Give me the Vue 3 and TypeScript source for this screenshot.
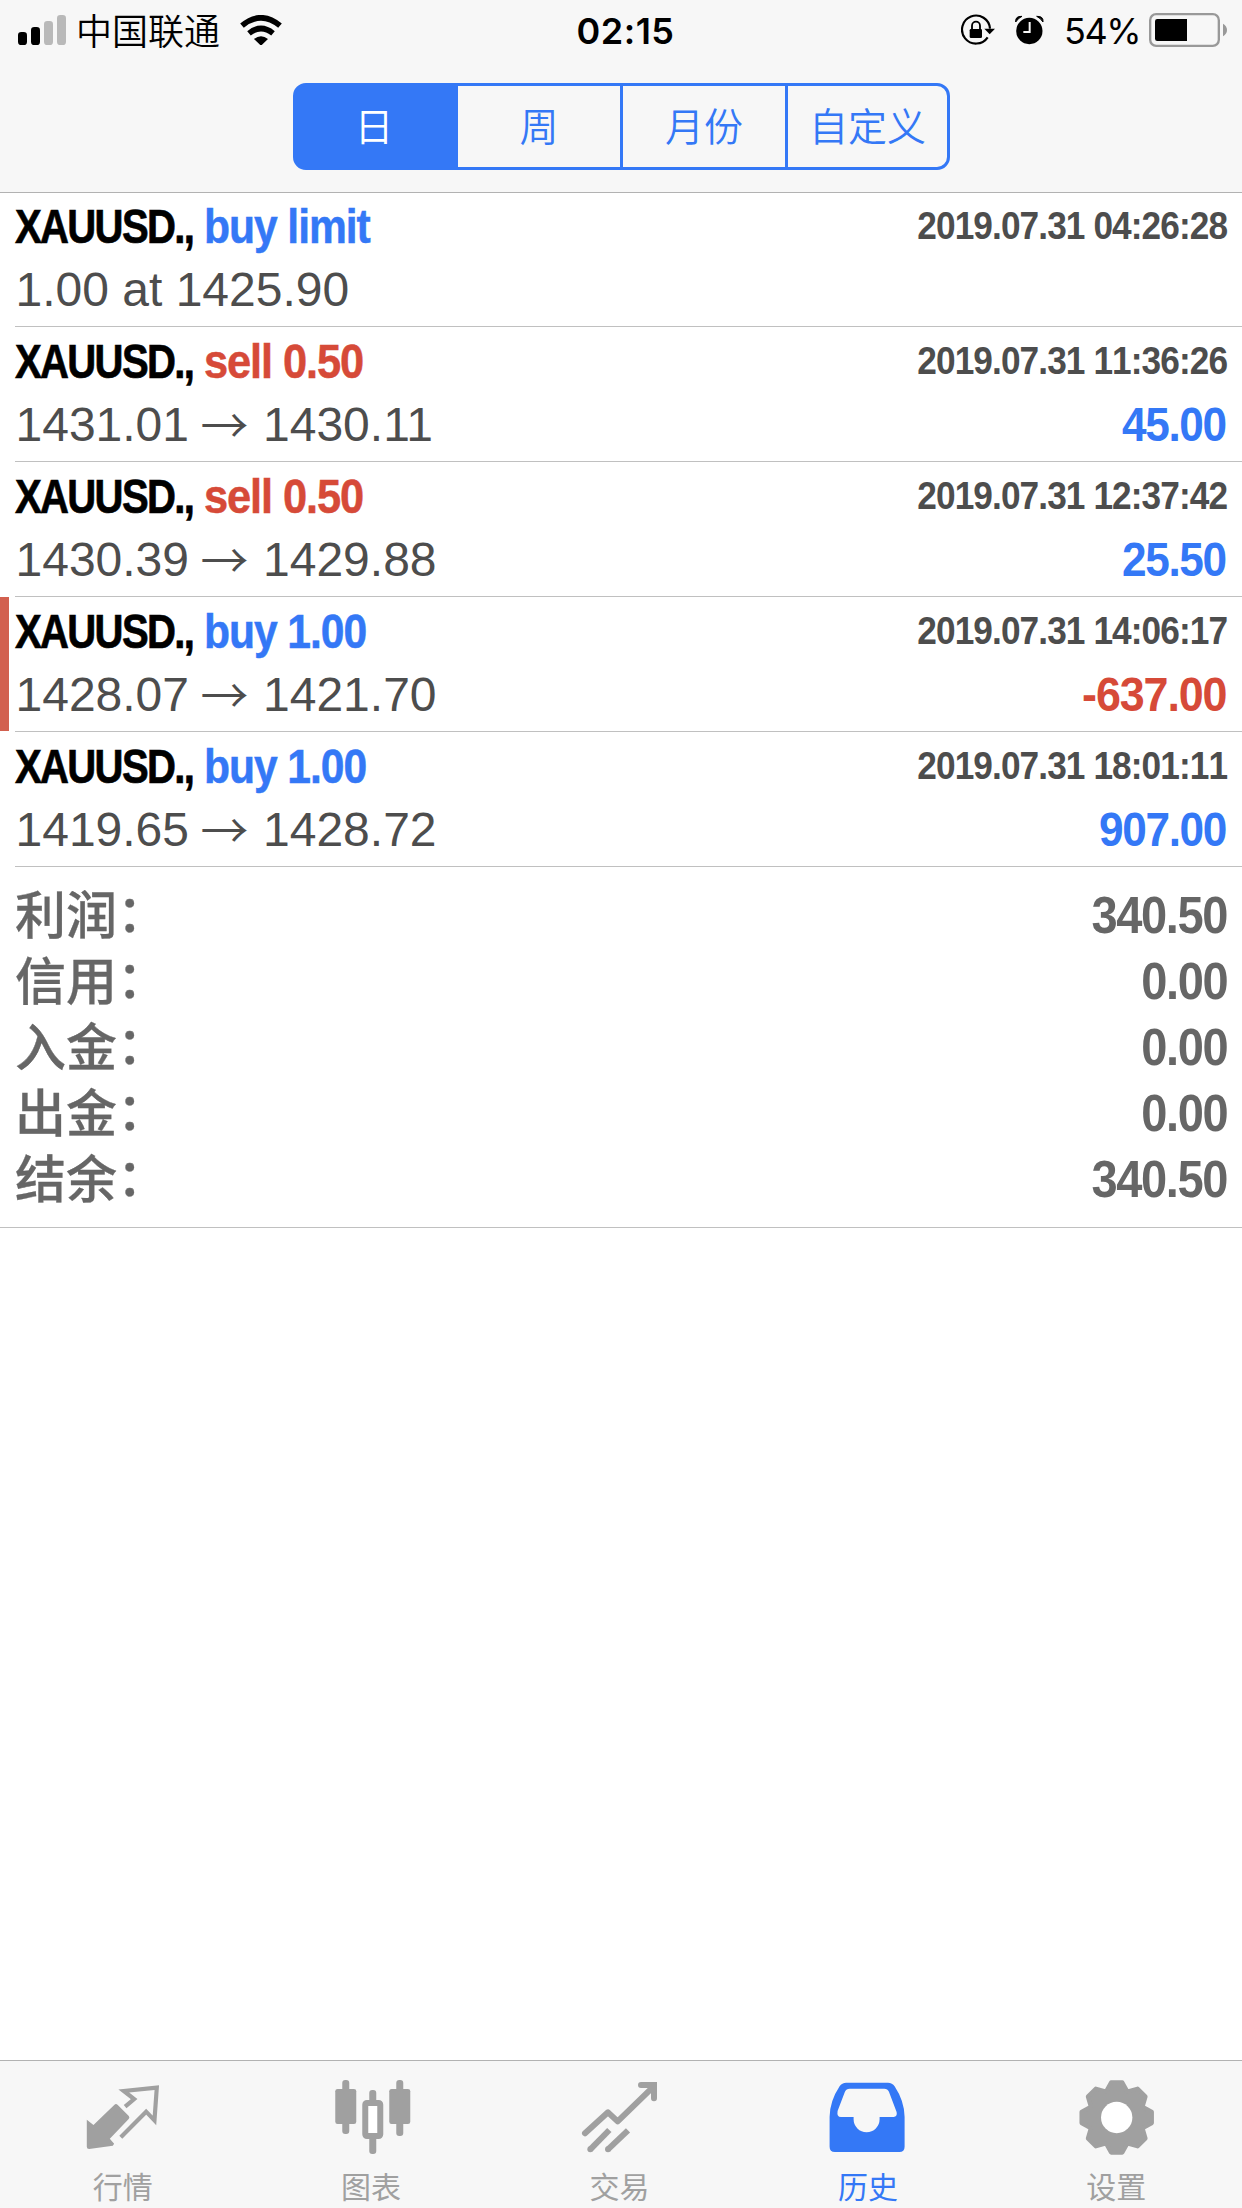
<script setup lang="ts">
type Tone = 'blue' | 'red'

interface Deal {
  symbol: string
  side: string
  tone: Tone
  from: string
  to?: string
  time: string
  profit?: string
  marked?: boolean
}

const periods: string[] = ['日', '周', '月份', '自定义']

const deals: Deal[] = [
  { symbol: 'XAUUSD.,', side: 'buy limit', tone: 'blue', from: '1.00 at 1425.90', time: '2019.07.31 04:26:28' },
  { symbol: 'XAUUSD.,', side: 'sell 0.50', tone: 'red', from: '1431.01', to: '1430.11', time: '2019.07.31 11:36:26', profit: '45.00' },
  { symbol: 'XAUUSD.,', side: 'sell 0.50', tone: 'red', from: '1430.39', to: '1429.88', time: '2019.07.31 12:37:42', profit: '25.50' },
  { symbol: 'XAUUSD.,', side: 'buy 1.00', tone: 'blue', from: '1428.07', to: '1421.70', time: '2019.07.31 14:06:17', profit: '-637.00', marked: true },
  { symbol: 'XAUUSD.,', side: 'buy 1.00', tone: 'blue', from: '1419.65', to: '1428.72', time: '2019.07.31 18:01:11', profit: '907.00' },
]

const totals = [
  { label: '利润', value: '340.50' },
  { label: '信用', value: '0.00' },
  { label: '入金', value: '0.00' },
  { label: '出金', value: '0.00' },
  { label: '结余', value: '340.50' },
]

const tabs = [
  { id: 'quotes', label: '行情', box: '252.6 84 240 240' },
  { id: 'chart', label: '图表', box: '998.2 84 240 240' },
  { id: 'trade', label: '交易', box: '123 84 240 240' },
  { id: 'history', label: '历史', box: '868.2 84 240 240' },
  { id: 'settings', label: '设置', box: '233.4 84 240 240' },
]

/* Eight-tooth cog outline centred on (cx, cy). */
function cog(cx: number, cy: number): string {
  const pts: string[] = []
  const at = (r: number, deg: number) => {
    const a = (deg * Math.PI) / 180
    pts.push(`${(cx + r * Math.cos(a)).toFixed(1)},${(cy + r * Math.sin(a)).toFixed(1)}`)
  }
  for (let k = 0; k < 8; k++) {
    const mid = k * 45
    at(86, mid - 20.5)
    at(106.5, mid - 9)
    at(106.5, mid + 9)
    at(86, mid + 20.5)
  }
  return pts.join(' ')
}
const cogPoints = cog(349.5, 202.5)
</script>

<template>
  <div class="screen">
    <header class="top">
      <div class="status">
        <div class="status-left">
          <svg class="signal" width="48" height="30" viewBox="0 0 144 90">
            <rect x="0" y="51" width="27" height="39" rx="10" fill="#000" />
            <rect x="39" y="36" width="27" height="54" rx="10" fill="#000" />
            <rect x="78" y="18" width="27" height="72" rx="10" fill="#b9b9b9" />
            <rect x="117" y="0" width="27" height="90" rx="10" fill="#b9b9b9" />
          </svg>
          <span class="carrier">中国联通</span>
          <svg class="wifi" width="42" height="30" viewBox="720 44 126 90">
            <g fill="none" stroke="#000" stroke-width="17">
              <path d="M726 76 Q783 29 840 76" />
              <path d="M747 99 Q783 70 819 99" />
            </g>
            <path d="M762 116 Q783 100 804 116 L786 133 Q783 136 780 133 Z" fill="#000" />
          </svg>
        </div>
        <span class="clock">02:15</span>
        <div class="status-right">
          <svg class="lock" width="34" height="32" viewBox="126 43 102 96">
            <path d="M206 113 A42 42 0 1 1 213 87" fill="none" stroke="#000" stroke-width="6.5" />
            <path d="M196 87 L228 87 L212 104 Z" fill="#000" />
            <rect x="152" y="88" width="37" height="27" rx="4" fill="#000" />
            <path d="M159 90 V78 a12 12 0 0 1 24 0 V90" fill="none" stroke="#000" stroke-width="5.5" />
          </svg>
          <svg class="alarm" width="29" height="30" viewBox="287 45 87 90">
            <circle cx="330" cy="93" r="39.5" fill="#000" />
            <path d="M289 66 Q287 48 308 49 Q297 54 289 66 Z" fill="#000" stroke="#000" stroke-width="3" stroke-linejoin="round" />
            <path d="M371 66 Q373 48 352 49 Q363 54 371 66 Z" fill="#000" stroke="#000" stroke-width="3" stroke-linejoin="round" />
            <path d="M331 66 V96 H312" fill="none" stroke="#f7f7f7" stroke-width="6" />
          </svg>
          <span class="percent">54%</span>
          <svg class="battery" width="78" height="34" viewBox="687 39 234 102">
            <rect x="690.5" y="42.5" width="206" height="95" rx="18" fill="none" stroke="#999" stroke-width="7" />
            <rect x="705" y="57" width="90" height="66" rx="7" fill="#000" />
            <rect x="785" y="57" width="16" height="66" fill="#000" />
            <path d="M909 71 Q921 78 921 90 Q921 102 909 109 Z" fill="#999" />
          </svg>
        </div>
      </div>
      <div class="segments">
        <button v-for="(p, i) in periods" :key="p" class="segment" :class="{ on: i === 0 }">{{ p }}</button>
      </div>
    </header>

    <main class="content">
      <section class="deals">
        <article v-for="(d, i) in deals" :key="i" class="deal">
          <div class="mark" :class="{ shown: d.marked }"></div>
          <div class="deal-body">
            <div class="line first">
              <div class="title">
                <div class="symbol-cell"><span class="symbol">{{ d.symbol }}</span></div>
                <span class="side" :class="d.tone">{{ d.side }}</span>
              </div>
              <span class="time">{{ d.time }}</span>
            </div>
            <div class="line second">
              <div class="prices">
                <span>{{ d.from }}</span>
                <template v-if="d.to">
                  <span class="arrow">→</span>
                  <span>{{ d.to }}</span>
                </template>
              </div>
              <span v-if="d.profit" class="profit" :class="d.profit.startsWith('-') ? 'red' : 'blue'">{{ d.profit }}</span>
            </div>
          </div>
        </article>
      </section>

      <section class="totals">
        <div v-for="t in totals" :key="t.label" class="total">
          <span class="total-label">{{ t.label }}<span class="colon">：</span></span>
          <span class="total-value">{{ t.value }}</span>
        </div>
      </section>
    </main>

    <nav class="tabs">
      <button v-for="t in tabs" :key="t.id" class="tab" :class="{ active: t.id === 'history' }">
        <svg width="80" height="80" :viewBox="t.box">
          <template v-if="t.id === 'quotes'">
            <path
              d="M261 209 L281 225 L344 164 Q349 160 354 165 L387 198 Q391 203 386 208 L330 266 L343 281 L339 287 L268 297 Q261 297 261 290 Z"
              fill="currentColor"
            />
            <path
              d="M376 170 L403 147 L372 123 L471 113 L464 211 L439 185 L363 262"
              fill="none"
              stroke="currentColor"
              stroke-width="12.5"
            />
          </template>
          <template v-else-if="t.id === 'chart'">
            <g fill="currentColor">
              <rect x="1026" y="90" width="21" height="162" rx="9" />
              <rect x="1005" y="117" width="63" height="105" rx="7" />
              <rect x="1188" y="90" width="21" height="168" rx="9" />
              <rect x="1167" y="117" width="63" height="105" rx="7" />
              <rect x="1107" y="120" width="21" height="40" rx="9" />
              <rect x="1107" y="255" width="21" height="57" rx="9" />
            </g>
            <rect x="1095" y="159" width="45" height="99" rx="5" fill="#fff" stroke="currentColor" stroke-width="18" />
          </template>
          <g v-else-if="t.id === 'trade'" fill="none" stroke="currentColor" stroke-width="18" stroke-linejoin="round">
            <path d="M135 250 L204 187 L233 214 L338 112" stroke-linecap="round" />
            <path d="M303 105 H342 V145" stroke-linecap="round" stroke-linejoin="miter" />
            <path d="M151 298 L208 240" />
            <path d="M204 298 L264 241" />
            <g fill="currentColor" stroke="none">
              <circle cx="151" cy="298" r="9" />
              <circle cx="204" cy="298" r="9" />
            </g>
          </g>
          <path
            v-else-if="t.id === 'history'"
            fill="currentColor"
            fill-rule="evenodd"
            d="M920 98 H1045 Q1058 98 1065 109 Q1094 153 1095 200 V290 Q1095 306 1079 306 H886 Q870 306 870 290 V200 Q871 153 900 109 Q907 98 920 98 Z M930 116 Q920 116 916 125 L894 183 Q891 201 904 201 H942 V208 A39 39 0 0 0 1020 208 V201 H1062 Q1074 200 1071 186 L1048 125 Q1044 116 1034 116 Z"
          />
          <template v-else>
            <polygon :points="cogPoints" fill="currentColor" stroke="currentColor" stroke-width="13" stroke-linejoin="round" />
            <circle cx="349.5" cy="202.5" r="47" fill="#fff" />
          </template>
        </svg>
        <span class="tab-label">{{ t.label }}</span>
      </button>
    </nav>
  </div>
</template>

<style>
html,
body {
  margin: 0;
  background: #fff;
}
</style>

<style scoped>
.screen {
  width: 1242px;
  height: 2208px;
  display: flex;
  flex-direction: column;
  overflow: hidden;
  background: #fff;
  font-family: 'Liberation Sans', 'Noto Sans CJK SC', sans-serif;
}
button {
  margin: 0;
  padding: 0;
  border: 0;
  background: none;
  font: inherit;
}
svg {
  display: block;
  flex: none;
}
.top {
  flex: none;
  box-sizing: border-box;
  height: 193px;
  background: #f7f7f7;
  border-bottom: 1px solid #b2b2b2;
}
.status {
  display: grid;
  grid-template-columns: 1fr auto 1fr;
  height: 60px;
  padding: 0 15px 0 18px;
}
.status-left,
.status-right {
  display: flex;
  align-items: flex-start;
}
.status-right {
  justify-content: flex-end;
}
.signal {
  margin-top: 15px;
}
.carrier {
  margin-left: 10px;
  font-family: 'Noto Sans CJK SC', sans-serif;
  font-size: 36px;
  font-weight: 350;
  line-height: 58px;
}
.wifi {
  margin: 15px 0 0 20px;
}
.clock {
  padding-left: 6px;
  font-family: Inter, sans-serif;
  font-size: 36px;
  font-weight: 600;
  line-height: 62px;
  letter-spacing: 0.5px;
}
.lock {
  margin-top: 14px;
}
.alarm {
  margin: 15px 0 0 20px;
}
.percent {
  margin-left: 20px;
  font-family: Inter, sans-serif;
  font-size: 36px;
  line-height: 62px;
  letter-spacing: -1.5px;
}
.battery {
  margin: 13px 0 0 9px;
}
.segments {
  display: grid;
  grid-template-columns: 162px 165px 165px 1fr;
  box-sizing: border-box;
  width: 657px;
  height: 87px;
  margin: 23px 0 0 293px;
  border: 3px solid #3478f6;
  border-radius: 13px;
  overflow: hidden;
  background: linear-gradient(#3478f6, #3478f6) left / 20px 100% no-repeat;
}
.segment {
  padding-bottom: 5px;
  border-right: 3px solid #3478f6;
  color: #3478f6;
  font-family: 'Noto Sans CJK SC', sans-serif;
  font-size: 39px;
  font-weight: 350;
  line-height: 70px;
}
.segment:last-child {
  border-right: 0;
}
.segment.on {
  padding-right: 3px;
  background: #3478f6;
  color: #fff;
}
.content {
  flex: 1;
}
.deal {
  display: flex;
  height: 135px;
}
.deal:first-child {
  height: 134px;
}
.mark {
  flex: none;
  width: 9px;
  height: 134px;
  margin-right: 6px;
}
.mark.shown {
  background: #d2604f;
}
.deal-body {
  flex: 1;
  box-sizing: border-box;
  padding-top: 1px;
  border-bottom: 1px solid #c0c0c0;
}
.deal:first-child .deal-body {
  padding-top: 0;
}
.line {
  display: flex;
  justify-content: space-between;
  padding-right: 15px;
  white-space: nowrap;
}
.first {
  height: 66px;
}
.title {
  display: flex;
  font-size: 48px;
  font-weight: 700;
  line-height: 68px;
}
.symbol-cell {
  width: 188.5px;
}
/* Bold text is set condensed: squeezed horizontally towards its aligned edge. */
.symbol {
  display: inline-block;
  color: #000;
  letter-spacing: -2px;
  transform: scaleX(0.835);
  transform-origin: left;
  -webkit-text-stroke: 0.7px #000;
}
.side {
  letter-spacing: -1.2px;
  transform: scaleX(0.888);
  transform-origin: left;
  -webkit-text-stroke: 0.5px currentColor;
}
.side.red {
  transform: scaleX(0.904);
}
.time {
  font-size: 39px;
  font-weight: 700;
  line-height: 65px;
  color: #4d4d4d;
  letter-spacing: -1px;
  font-kerning: none;
  transform: scaleX(0.903);
  transform-origin: right;
}
.second {
  font-size: 48px;
  line-height: 62px;
  color: #4d4d4d;
}
.prices {
  display: flex;
  padding-left: 0.5px;
}
.arrow {
  margin: -3px 14.5px 0 11.5px;
  font-family: 'Noto Sans CJK SC', sans-serif;
  font-weight: 350;
}
.profit {
  padding-right: 1px;
  font-weight: 700;
  letter-spacing: -1.5px;
  transform: scaleX(0.92);
  transform-origin: right;
}
.profit.red {
  letter-spacing: -1.2px;
  transform: scaleX(0.935);
}
.blue {
  color: #3478f6;
}
.red {
  color: #d64a38;
}
.totals {
  padding: 15px 15px 15px 15px;
  border-bottom: 1px solid #c0c0c0;
}
.total {
  display: flex;
  justify-content: space-between;
  height: 66px;
  font-size: 51px;
  color: #666;
}
.total-label {
  font-family: 'Noto Sans CJK SC', sans-serif;
  font-weight: 500;
  line-height: 61px;
  -webkit-text-stroke: 0.3px #666;
}
.colon {
  position: relative;
  top: -2px;
}
.total-value {
  font-weight: 700;
  line-height: 68px;
  letter-spacing: -1.5px;
  transform: scaleX(0.922);
  transform-origin: right;
}
.tabs {
  flex: none;
  display: grid;
  grid-template-columns: repeat(5, 1fr);
  box-sizing: border-box;
  height: 148px;
  background: #f7f7f7;
  border-top: 1px solid #b2b2b2;
}
.tab {
  display: flex;
  flex-direction: column;
  align-items: center;
  padding-top: 17px;
  color: #a0a0a0;
}
.tab.active {
  color: #3478f6;
}
.tab-label {
  margin-top: 7px;
  padding-right: 3px;
  font-family: 'Noto Sans CJK SC', sans-serif;
  font-size: 30px;
  line-height: 40px;
}
</style>
